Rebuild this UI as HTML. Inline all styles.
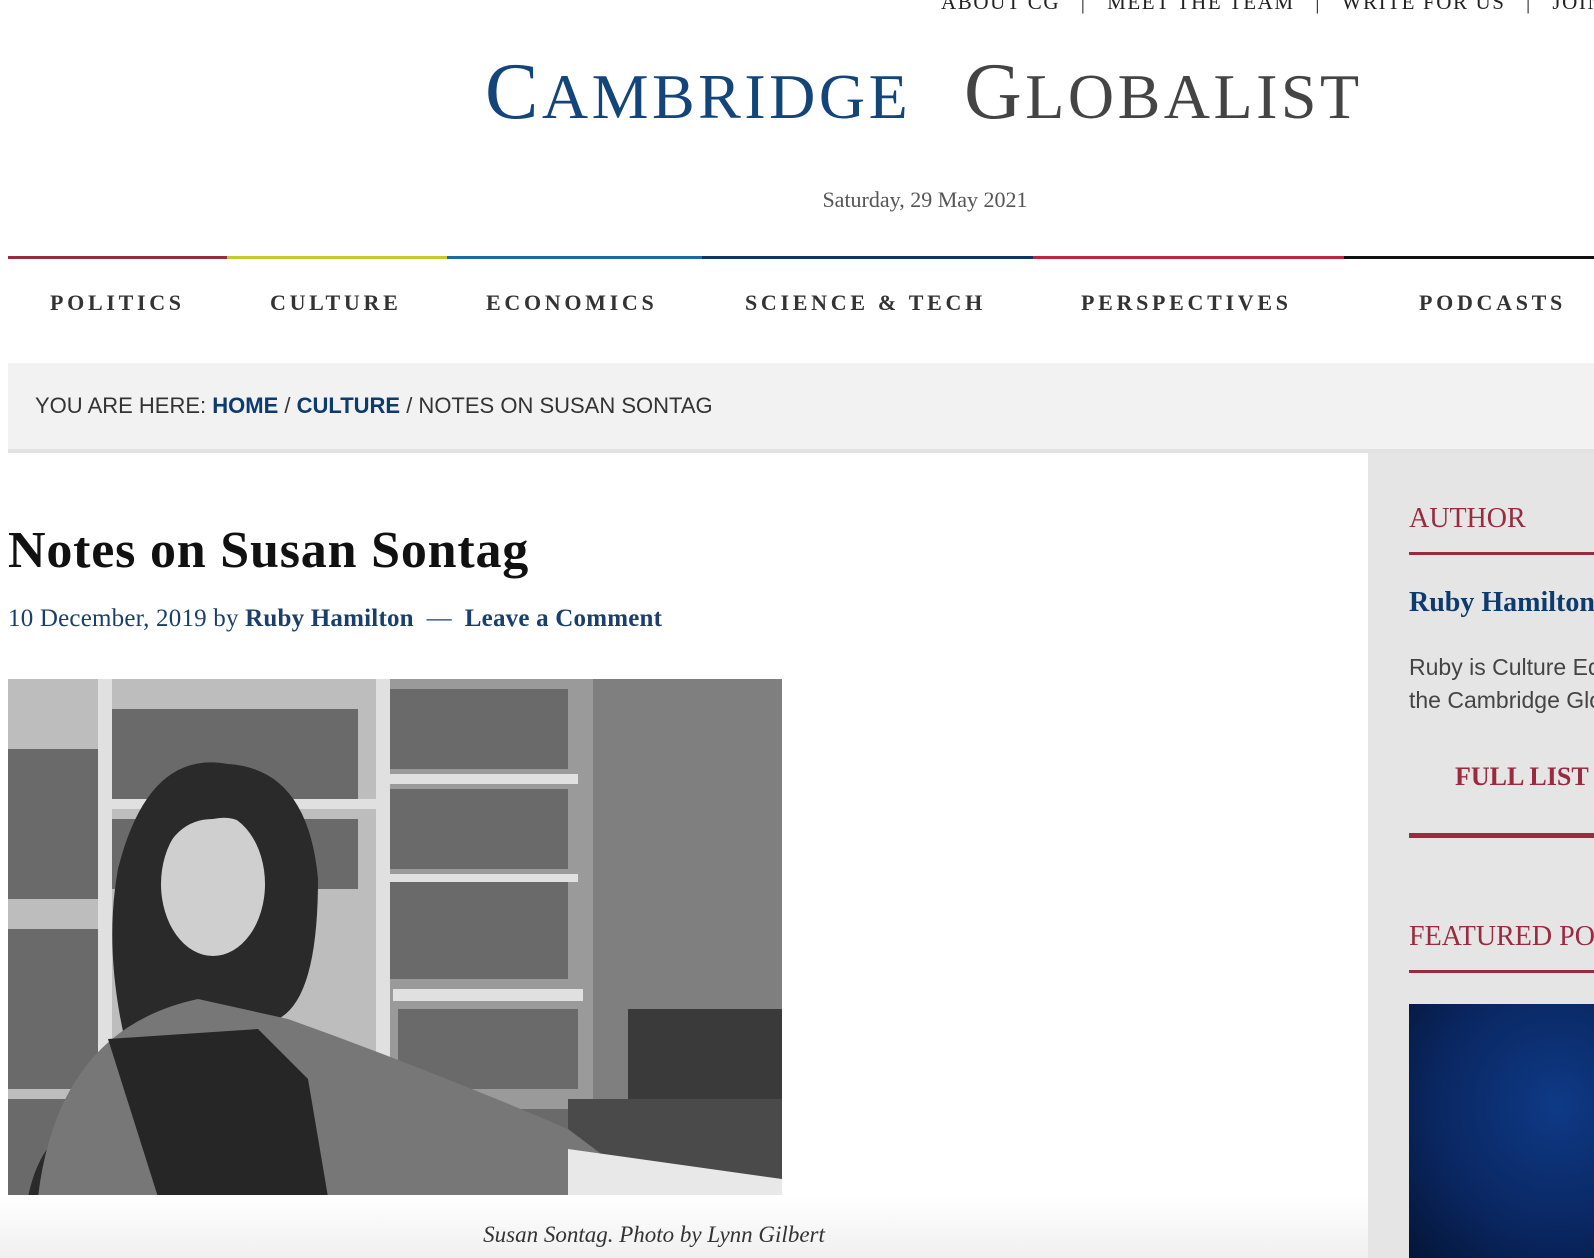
<!DOCTYPE html>
<html><head><meta charset="utf-8"><style>
*{margin:0;padding:0;box-sizing:border-box}
html,body{width:1594px;height:1258px;overflow:hidden;background:#fff;position:relative;font-family:"Liberation Serif",serif}
.a{position:absolute;white-space:nowrap}
.top{top:-10px;font-size:21px;color:#222;letter-spacing:1.6px}
.nav{top:290px;font-size:22px;font-weight:bold;color:#333;letter-spacing:3.7px}
.line{position:absolute;top:256px;height:3px}
.crim{color:#9a2a3e}
</style></head><body>
<div class="a top" style="left:941px">ABOUT CG &nbsp;&nbsp;| &nbsp;&nbsp;MEET THE TEAM &nbsp;&nbsp;| &nbsp;&nbsp;WRITE FOR US &nbsp;&nbsp;| &nbsp;&nbsp;JOIN</div>

<div class="a" style="left:485px;top:52px;color:#13457a;letter-spacing:3.5px;line-height:1"><span style="font-size:80px">C</span><span style="font-size:64px">AMBRIDGE</span></div>
<div class="a" style="left:964px;top:52px;color:#444;letter-spacing:3.5px;line-height:1"><span style="font-size:80px">G</span><span style="font-size:64px">LOBALIST</span></div>

<div class="a" style="left:0;width:1850px;text-align:center;top:187px;font-size:22px;color:#555">Saturday, 29 May 2021</div>

<div class="line" style="left:8px;width:219px;background:#9a2a3e"></div>
<div class="line" style="left:227px;width:220px;background:#c2cb2a"></div>
<div class="line" style="left:447px;width:255px;background:#1d6aa3"></div>
<div class="line" style="left:702px;width:331px;background:#0f3563"></div>
<div class="line" style="left:1033px;width:311px;background:#c0243f"></div>
<div class="line" style="left:1344px;width:250px;background:#111"></div>

<div class="a nav" style="left:50px">POLITICS</div>
<div class="a nav" style="left:270px">CULTURE</div>
<div class="a nav" style="left:486px">ECONOMICS</div>
<div class="a nav" style="left:745px">SCIENCE &amp; TECH</div>
<div class="a nav" style="left:1081px">PERSPECTIVES</div>
<div class="a nav" style="left:1419px">PODCASTS</div>

<div class="a" style="left:8px;top:363px;width:1586px;height:86px;background:#f2f2f2"></div>
<div class="a" style="left:8px;top:449px;width:1586px;height:4px;background:#e2e2e2"></div>
<div class="a" style="left:35px;top:393px;font-family:'Liberation Sans',sans-serif;font-size:22px;color:#333">YOU ARE HERE: <b style="color:#0d3b6e">HOME</b> / <b style="color:#0d3b6e">CULTURE</b> / NOTES ON SUSAN SONTAG</div>

<div class="a" style="left:1368px;top:453px;width:226px;height:805px;background:#e5e5e5"></div>
<div class="a crim" style="left:1409px;top:503px;font-size:28px">AUTHOR</div>
<div class="a" style="left:1409px;top:552px;width:185px;height:3px;background:#9a2a3e"></div>
<div class="a" style="left:1409px;top:587px;font-size:28px;font-weight:bold;color:#0d3b6e">Ruby Hamilton</div>
<div class="a" style="left:1409px;top:651px;font-family:'Liberation Sans',sans-serif;font-size:23px;color:#444;line-height:33px">Ruby is Culture Editor at<br>the Cambridge Globalist</div>
<div class="a crim" style="left:1455px;top:762px;font-size:26px;font-weight:bold">FULL LIST</div>
<div class="a" style="left:1409px;top:833px;width:185px;height:5px;background:#9a2a3e"></div>
<div class="a crim" style="left:1409px;top:921px;font-size:28px">FEATURED POSTS</div>
<div class="a" style="left:1409px;top:970px;width:185px;height:3px;background:#9a2a3e"></div>
<div class="a" style="left:1409px;top:1004px;width:185px;height:254px;background:radial-gradient(ellipse at 80% 40%,#0e3a86,#0a2660 60%,#041536)"></div>

<div class="a" style="left:8px;top:521px;font-size:52px;font-weight:bold;color:#111;letter-spacing:0.8px">Notes on Susan Sontag</div>
<div class="a" style="left:8px;top:605px;font-size:25px;color:#1b3f6b;letter-spacing:0.2px">10 December, 2019 by <b>Ruby Hamilton</b> &nbsp;— &nbsp;<b>Leave a Comment</b></div>

<svg class="a" style="left:8px;top:679px" width="774" height="518" viewBox="0 0 774 518">
<rect width="774" height="518" fill="#9a9a9a"/>
<rect x="0" y="0" width="370" height="518" fill="#bdbdbd"/>
<g fill="#6a6a6a">
<rect x="100" y="30" width="250" height="90"/><rect x="100" y="140" width="250" height="70"/>
<rect x="380" y="10" width="180" height="80"/><rect x="380" y="110" width="180" height="80"/><rect x="380" y="200" width="180" height="100"/><rect x="390" y="330" width="180" height="80"/><rect x="400" y="430" width="170" height="80"/>
<rect x="0" y="70" width="90" height="150"/><rect x="0" y="250" width="90" height="160"/><rect x="0" y="420" width="90" height="100"/>
</g>
<g fill="#e0e0e0"><rect x="90" y="0" width="14" height="518"/><rect x="368" y="0" width="14" height="518"/><rect x="100" y="120" width="270" height="10"/><rect x="380" y="95" width="190" height="10"/><rect x="380" y="195" width="190" height="8"/><rect x="385" y="310" width="190" height="12"/></g>
<rect x="585" y="0" width="189" height="518" fill="#7f7f7f"/>
<rect x="620" y="330" width="154" height="130" fill="#3a3a3a"/>
<rect x="560" y="420" width="214" height="98" fill="#4a4a4a"/>
<path d="M140 440 Q90 300 110 190 Q140 70 220 85 Q300 90 310 200 Q310 320 270 340 L300 380 L420 420 L560 470 L590 518 L20 518 Q40 420 140 440Z" fill="#2a2a2a"/>
<ellipse cx="205" cy="205" rx="52" ry="72" fill="#cfcfcf"/>
<path d="M150 190 Q160 100 220 105 Q270 110 265 200 Q250 130 205 140 Q165 140 150 190Z" fill="#2a2a2a"/>
<path d="M30 518 Q50 350 190 320 L280 340 Q420 390 560 450 L600 480 L600 518Z" fill="#777"/>
<path d="M100 360 L150 518 L320 518 L300 400 L250 350 Z" fill="#262626"/>
<path d="M560 470 L774 500 L774 518 L560 518Z" fill="#e8e8e8"/>
</svg>
<div class="a" style="left:0;top:1195px;width:1368px;height:63px;background:linear-gradient(#fff,#f0f0f0)"></div>
<div class="a" style="left:0;width:1308px;text-align:center;top:1222px;font-size:23px;font-style:italic;color:#333">Susan Sontag. Photo by Lynn Gilbert</div>
</body></html>
